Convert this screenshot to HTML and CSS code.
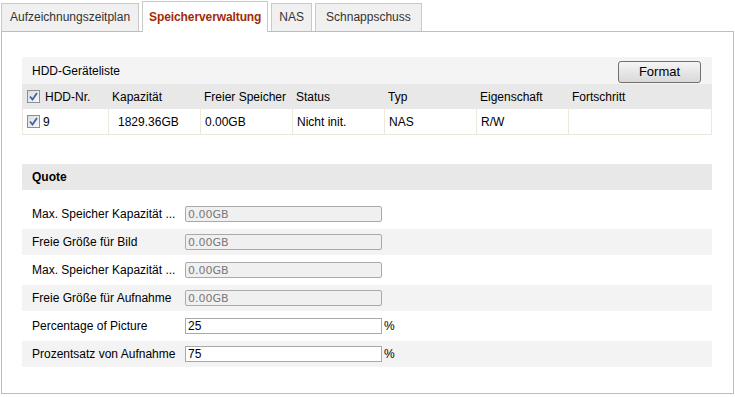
FILE: index.html
```html
<!DOCTYPE html>
<html>
<head>
    <title>Speicherverwaltung</title>
    <link rel="stylesheet" href="styles.css">
</head>
<body>
    <div class="tabs">
        <div class="tab">Aufzeichnungszeitplan</div>
        <div class="tab active">Speicherverwaltung</div>
        <div class="tab">NAS</div>
        <div class="tab">Schnappschuss</div>
    </div>

    <div class="panel">
        <div class="bar">
            <span>HDD-Geräteliste</span>
            <button class="btn">Format</button>
        </div>

        <div class="hdd-table">
            <div class="hdd-row head">
                <div class="cell first"><span class="check"><svg width="9" height="9" viewBox="0 0 9 9"><path d="M1 4.5 L3.5 7.5 L8 1" fill="none" stroke="#3c64a8" stroke-width="1.8"/></svg></span>HDD-Nr.</div>
                <div class="cell">Kapazität</div>
                <div class="cell">Freier Speicher</div>
                <div class="cell">Status</div>
                <div class="cell">Typ</div>
                <div class="cell">Eigenschaft</div>
                <div class="cell last">Fortschritt</div>
            </div>
            <div class="hdd-row data">
                <div class="cell first"><span class="check"><svg width="9" height="9" viewBox="0 0 9 9"><path d="M1 4.5 L3.5 7.5 L8 1" fill="none" stroke="#3c64a8" stroke-width="1.8"/></svg></span>9</div>
                <div class="cell">1829.36GB</div>
                <div class="cell">0.00GB</div>
                <div class="cell">Nicht init.</div>
                <div class="cell">NAS</div>
                <div class="cell">R/W</div>
                <div class="cell last"></div>
            </div>
        </div>

        <div class="bar quote">
            <span>Quote</span>
        </div>

        <div class="quote-list">
            <div class="quote-row">
                <label>Max. Speicher Kapazität ...</label>
                <input class="field" type="text" value="0.00GB" disabled>
            </div>
            <div class="quote-row alt">
                <label>Freie Größe für Bild</label>
                <input class="field" type="text" value="0.00GB" disabled>
            </div>
            <div class="quote-row">
                <label>Max. Speicher Kapazität ...</label>
                <input class="field" type="text" value="0.00GB" disabled>
            </div>
            <div class="quote-row alt">
                <label>Freie Größe für Aufnahme</label>
                <input class="field" type="text" value="0.00GB" disabled>
            </div>
            <div class="quote-row">
                <label>Percentage of Picture</label>
                <input class="field" type="text" value="25">
                <span class="unit">%</span>
            </div>
            <div class="quote-row alt">
                <label>Prozentsatz von Aufnahme</label>
                <input class="field" type="text" value="75">
                <span class="unit">%</span>
            </div>
        </div>
    </div>
</body>
</html>
```

FILE: styles.css
```css
body {
    margin: 0;
    font-family: "Liberation Sans", Arial, sans-serif;
    font-size: 12px;
    color: #000;
    background: #fff;
}

.tabs {
    display: flex;
    align-items: flex-end;
    gap: 3px;
    padding-left: 1px;
    height: 32px;
    position: relative;
    z-index: 1;
}

.tab {
    height: 27px;
    line-height: 27px;
    padding: 0 8px;
    background-color: #f0f0f0;
    border: 1px solid #c9c9c9;
    border-bottom: none;
    color: #333;
    margin-bottom: 1px;
}

.tab.active {
    height: 30px;
    line-height: 30px;
    margin-bottom: 0;
    padding: 0 6px;
    background-color: #fff;
    color: #a02c08;
    font-weight: bold;
    letter-spacing: -0.1px;
}

.tab:nth-child(3) {
    padding: 0 7px;
}

.tab:last-child {
    padding: 0 10px;
}

.panel {
    box-sizing: border-box;
    margin: -1px 1px 0 1px;
    height: 363px;
    border: 1px solid #bdbdbd;
    padding: 25px 21px 0 20px;
}

.bar {
    display: flex;
    align-items: center;
    justify-content: space-between;
    height: 27px;
    padding: 0 11px 0 10px;
    background-color: #f4f4f4;
}

.btn {
    width: 83px;
    height: 22px;
    padding: 0;
    margin-top: 2px;
    font-family: "Liberation Sans", Arial, sans-serif;
    font-size: 13px;
    color: #000;
    border: 1px solid #707070;
    border-radius: 3px;
    background-image: linear-gradient(to bottom, #f5f5f5, #e6e6e6 50%, #d9d9d9);
}

.hdd-row {
    display: flex;
    height: 25px;
    align-items: stretch;
}

.hdd-row.head {
    background-color: #e8e8e8;
}

.hdd-row.data {
    border: 1px solid #ece8da;
    border-top: none;
}

.cell {
    width: 92px;
    display: flex;
    align-items: center;
    padding-left: 4px;
    box-sizing: border-box;
}

.cell.first {
    width: 86px;
    padding-left: 4px;
}

.cell.last {
    flex: 1;
}

.head .cell.first {
    padding-left: 5px;
}

.data .cell {
    border-right: 1px solid #ece8da;
}

.data .cell:nth-child(2) {
    padding-left: 9px;
}

.data .cell.last {
    border-right: none;
}

.check {
    display: inline-flex;
    align-items: center;
    justify-content: center;
    width: 11px;
    height: 11px;
    border: 1px solid #8e8f8f;
    background-image: linear-gradient(to bottom right, #dcdcdc, #f8f8f8);
    margin-right: 5px;
}

.data .check {
    margin-right: 3px;
}

.bar.quote {
    margin-top: 29px;
    height: 26px;
    background-color: #e8e8e8;
    font-weight: bold;
}

.quote-list {
    display: flex;
    flex-direction: column;
    gap: 2px;
    margin-top: 11px;
}

.quote-row {
    display: flex;
    align-items: center;
    height: 26px;
}

.quote-row.alt {
    background-color: #f3f3f3;
}

.quote-row label {
    width: 153px;
    padding-left: 10px;
}

.field {
    width: 197px;
    height: 16px;
    box-sizing: border-box;
    margin: 0;
    padding: 0 2px;
    border: 1px solid #a9a9a9;
    font-family: "Liberation Sans", Arial, sans-serif;
    font-size: 12px;
    color: #000;
    background-color: #fff;
}

.field:disabled {
    background-color: #f0f0f0;
    color: #7a7a7a;
    border-radius: 2px;
    font-family: "DejaVu Sans", sans-serif;
    font-size: 11px;
}

.unit {
    margin-left: 2px;
}
```
